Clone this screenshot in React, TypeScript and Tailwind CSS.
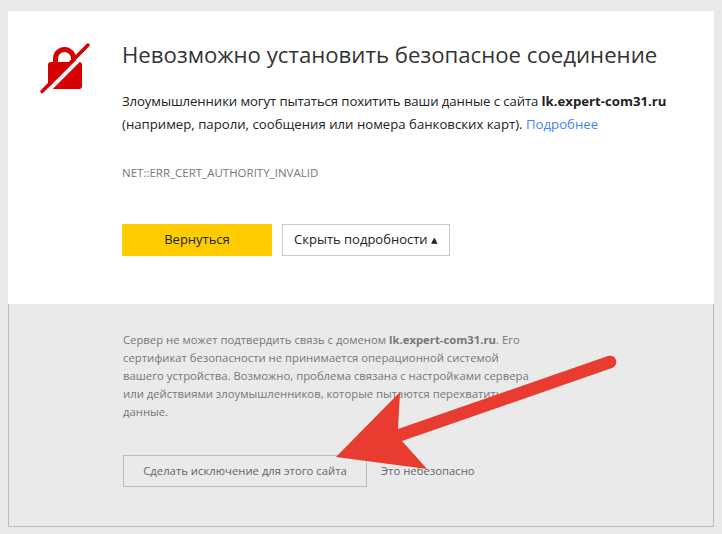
export default function App() {
  return (
    <div className="relative h-[534px] w-[722px] overflow-hidden bg-[#eaeaea] pt-[11px] px-2 font-['Open_Sans',sans-serif]">
      <div className="flex h-[293px] bg-white pl-[114px] pt-[29px]">
        <div className="w-full">
          <h1 className="text-[22.2px] leading-[30px] text-[#333]">Невозможно установить безопасное соединение</h1>
          <p className="mt-[20px] text-[13.2px] leading-[23px] text-[#222]">
            <span className="tracking-[-0.1px]">Злоумышленники могут пытаться похитить ваши данные с сайта </span><b>lk.expert-com31.ru</b>
            <br />
            (например, пароли, сообщения или номера банковских карт). <span className="text-[#4285f4]">Подробнее</span>
          </p>
          <p className="mt-[29px] text-[11.5px] leading-[16px] text-[#777]">NET::ERR_CERT_AUTHORITY_INVALID</p>
          <div className="mt-[43px] flex gap-[10px]">
            <button className="h-[32px] w-[150px] rounded-[1px] bg-[#ffcc00] text-[13px] text-[#222]">Вернуться</button>
            <button className="h-[32px] w-[168px] border border-[#ccc] bg-white text-[13px] text-[#222]">Скрыть подробности ▴</button>
          </div>
        </div>
      </div>
      <div className="h-[223px] border-x border-b border-[#bbb] pl-[114px] pt-[27px]">
        <p className="text-[11.3px] leading-[18px] text-[#777]">
          Сервер не может подтвердить связь с доменом <b>lk.expert-com31.ru</b>. Его
          <br />
          сертификат безопасности не принимается операционной системой
          <br />
          вашего устройства. Возможно, проблема связана с настройками сервера
          <br />
          или действиями злоумышленников, которые пытаются перехватить
          <br />
          данные.
        </p>
        <div className="mt-[34px] flex items-center gap-[14px]">
          <button className="h-[32px] w-[244px] border border-[#bbb] text-[11.3px] text-[#666]">Сделать исключение для этого сайта</button>
          <span className="text-[11.3px] text-[#666]">Это небезопасно</span>
        </div>
      </div>
      <svg className="absolute left-0 top-0" width="722" height="534" viewBox="0 0 722 534">
        <rect x="48" y="62" width="34" height="27" rx="3" fill="#d50000" />
        <path fill="none" stroke="#d50000" strokeWidth="5" d="M55.500 63V58.500a9 9 0 0 1 18 0V63" />
        <path stroke="#ffffff" strokeWidth="4" d="M44 94.800 92 46.800" />
        <path stroke="#d50000" strokeWidth="3.500" strokeLinecap="round" d="M42 91.500 88 45" />
        <path fill="#e83c30" d="M400 392 398 429 608 356a6 6 0 0 1 4 12L402 441 427 469 336 457z" />
      </svg>
    </div>
  );
}
